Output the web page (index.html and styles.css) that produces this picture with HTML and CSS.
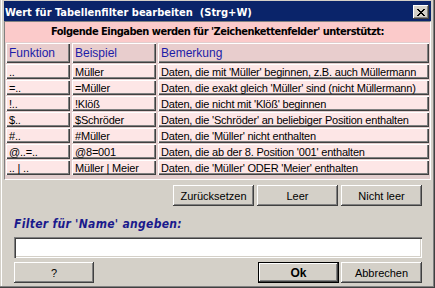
FILE: index.html
```html
<!DOCTYPE html>
<html lang="de">
<head>
    <meta charset="UTF-8">
    <title>Wert für Tabellenfilter bearbeiten</title>
    <link rel="stylesheet" href="styles.css">
</head>
<body>

<div class="window">
    <div class="titlebar">
        <span class="title">Wert für Tabellenfilter bearbeiten  (Strg+W)</span>
        <button class="close" title="Schließen">
            <svg width="8" height="7" viewBox="0 0 8 7" shape-rendering="crispEdges">
                <path fill="#000" d="M0 0h2v1H0z M6 0h2v1H6z M1 1h2v1H1z M5 1h2v1H5z M2 2h4v1H2z M3 3h2v1H3z M2 4h4v1H2z M1 5h2v1H1z M5 5h2v1H5z M0 6h2v1H0z M6 6h2v1H6z"/>
            </svg>
        </button>
    </div>

    <div class="content">
        <div class="panel">
            <div class="banner">Folgende Eingaben werden für 'Zeichenkettenfelder' unterstützt:</div>
            <div class="grid">
                <div class="cell head">Funktion</div>
                <div class="cell head">Beispiel</div>
                <div class="cell head">Bemerkung</div>

                <div class="cell">..</div>
                <div class="cell">Müller</div>
                <div class="cell">Daten, die mit 'Müller' beginnen, z.B. auch Müllermann</div>

                <div class="cell">=..</div>
                <div class="cell">=Müller</div>
                <div class="cell">Daten, die exakt gleich 'Müller' sind (nicht Müllermann)</div>

                <div class="cell">!..</div>
                <div class="cell">!Klöß</div>
                <div class="cell">Daten, die nicht mit 'Klöß' beginnen</div>

                <div class="cell">$..</div>
                <div class="cell">$Schröder</div>
                <div class="cell">Daten, die 'Schröder' an beliebiger Position enthalten</div>

                <div class="cell">#..</div>
                <div class="cell">#Müller</div>
                <div class="cell">Daten, die 'Müller' nicht enthalten</div>

                <div class="cell">@..=..</div>
                <div class="cell">@8=001</div>
                <div class="cell">Daten, die ab der 8. Position '001' enthalten</div>

                <div class="cell">.. | ..</div>
                <div class="cell">Müller | Meier</div>
                <div class="cell">Daten, die 'Müller' ODER 'Meier' enthalten</div>
            </div>
        </div>

        <div class="quick-buttons">
            <button class="btn">Zurücksetzen</button>
            <button class="btn">Leer</button>
            <button class="btn">Nicht leer</button>
        </div>

        <label class="filter-label" for="filter">Filter für 'Name' angeben:</label>
        <input class="filter-input" id="filter" type="text">

        <div class="footer">
            <button class="btn btn-help">?</button>
            <span class="spacer"></span>
            <button class="btn btn-default">Ok</button>
            <button class="btn">Abbrechen</button>
        </div>
    </div>
</div>

</body>
</html>
```

FILE: styles.css
```css
* {
    box-sizing: border-box;
}

body {
    margin: 0;
    background-color: #d4d0c8;
    font-family: "Liberation Sans", Arial, sans-serif;
    font-size: 11px;
    color: #000;
}

.window {
    width: 435px;
    height: 288px;
    padding: 1px 4px 4px 4px;
    background-color: #d4d0c8;
    box-shadow: inset -1px -1px #404040, inset -2px -2px #808080, inset 1px 0 #d4d0c8, inset 2px 0 #fff;
    display: flex;
    flex-direction: column;
}

.titlebar {
    height: 20px;
    background-color: #0a246a;
    color: #fff;
    display: flex;
    align-items: center;
    padding: 2px 2px 0 1px;
}

.title {
    flex: 1;
    font-family: "DejaVu Sans Condensed", "DejaVu Sans", sans-serif;
    font-weight: bold;
    font-size: 11px;
    white-space: pre;
}

.close {
    width: 16px;
    height: 14px;
    padding: 0;
    border: 0;
    background-color: #d4d0c8;
    box-shadow: inset -1px -1px #404040, inset 1px 1px #fff, inset -2px -2px #808080;
    display: flex;
    align-items: center;
    justify-content: center;
}

.content {
    flex: 1;
    display: flex;
    flex-direction: column;
}

.panel {
    border: 1px solid;
    border-color: #808080 #fff #fff #808080;
    background-color: #e2cdcd;
}

.banner {
    height: 20px;
    line-height: 20px;
    background-color: #fbcaca;
    text-align: center;
    font-family: "DejaVu Sans Condensed", "DejaVu Sans", sans-serif;
    font-weight: bold;
    font-size: 11px;
    letter-spacing: -0.5px;
}

.grid {
    display: grid;
    grid-template-columns: 64px 84px 1fr;
    grid-template-rows: 20px;
    grid-auto-rows: 15px;
    gap: 1px 2px;
    padding: 1px 1px 4px 1px;
}

.cell {
    display: flex;
    align-items: center;
    padding: 0 3px 0 3px;
    background-color: #fde6e6;
    box-shadow: inset 1px 1px #fff, inset -1px -1px #404040, inset -2px -2px #808080;
    white-space: pre;
    overflow: hidden;
    letter-spacing: -0.2px;
}

.head {
    background-color: #e8cdcd;
    color: #1c1ca8;
    font-size: 12px;
    letter-spacing: 0;
}

.quick-buttons {
    margin-top: 5px;
    padding-right: 9px;
    display: flex;
    justify-content: flex-end;
    gap: 3px;
}

.btn {
    width: 81px;
    height: 21px;
    padding: 0;
    border: 0;
    background-color: #d4d0c8;
    font-family: "Liberation Sans", Arial, sans-serif;
    font-size: 11px;
    color: #000;
    box-shadow: inset -1px -1px #404040, inset 1px 1px #fff, inset -2px -2px #808080;
}

.btn-default {
    font-weight: bold;
    font-size: 12px;
    box-shadow: inset 0 0 0 1px #000, inset -2px -2px #404040, inset 2px 2px #fff, inset -3px -3px #808080;
}

.filter-label {
    margin: 11px 0 0 10px;
    line-height: 14px;
    font-family: "DejaVu Sans Condensed", "DejaVu Sans", sans-serif;
    font-weight: bold;
    font-style: italic;
    font-size: 12px;
    letter-spacing: 0.3px;
    color: #1a1a8c;
}

.filter-input {
    margin: 6px 9px 0 10px;
    height: 21px;
    border: 0;
    padding: 0 4px;
    background-color: #fff;
    box-shadow: inset 1px 1px #808080, inset 2px 2px #404040, inset -1px -1px #fff, inset -2px -2px #d4d0c8;
    outline: none;
}

.footer {
    margin-top: 4px;
    padding: 0 9px 0 10px;
    display: flex;
    gap: 2px;
}

.btn-help {
    width: 80px;
}

.spacer {
    flex: 1;
}
```
